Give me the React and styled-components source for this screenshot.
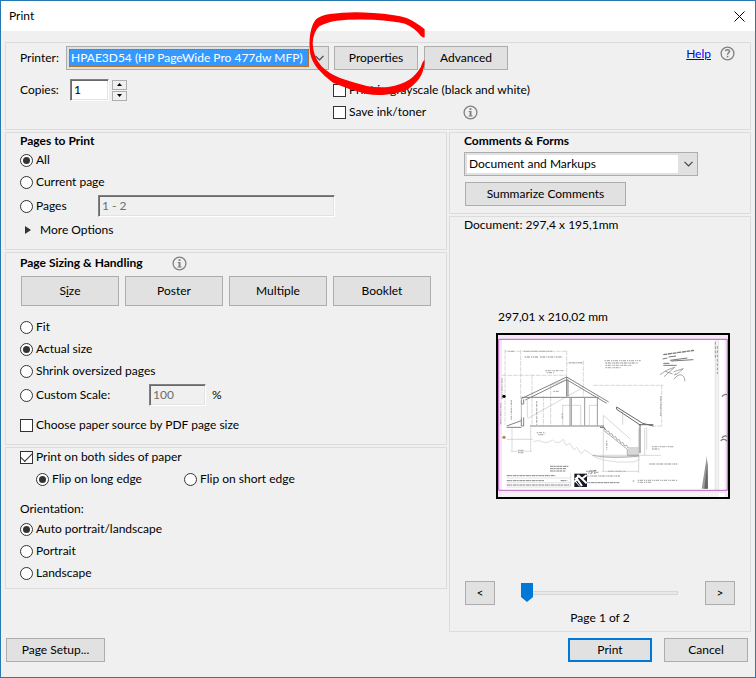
import { useState } from "react";
import styled, { createGlobalStyle, css } from "styled-components";

const GlobalStyle = createGlobalStyle`
  * {
    box-sizing: border-box;
  }
  body {
    margin: 0;
  }
  body, button, input, select {
    font-family: Lato, "Open Sans", sans-serif;
    font-size: 12px;
    line-height: 16px;
    color: #000;
  }
`;
const Window = styled.div`
  position: relative;
  display: flex;
  flex-direction: column;
  min-height: 100vh;
  background: #f0f0f0;
  border: 1px solid #2878b4;
`;
const TitleBar = styled.header`
  display: flex;
  align-items: center;
  justify-content: space-between;
  height: 30px;
  padding: 0 8px;
  background: #fff;
`;
const Title = styled.h1`
  margin: 0;
  font-size: 12px;
  font-weight: normal;
`;
const CloseButton = styled.button`
  display: flex;
  padding: 2px;
  border: 0;
  background: none;
`;
const Body = styled.main`
  display: grid;
  gap: 2px;
  padding: 11px 4px 0;
`;
const Columns = styled.div`
  display: grid;
  grid-template-columns: 1fr 302px;
  gap: 2px;
  align-items: start;
`;
const Column = styled.div`
  display: grid;
  gap: 2px;
`;
const Panel = styled.section`
  border: 1px solid #dcdcdc;
  padding: ${props => props.$top || 0}px 14px ${props => props.$bottom || 0}px;
`;
const Heading = styled.h2`
  display: flex;
  align-items: center;
  gap: 29px;
  height: ${props => props.$height || 16}px;
  margin: 0 0 ${props => props.$bottom || 0}px;
  font-size: 12px;
  font-weight: bold;
`;
const Row = styled.div`
  display: flex;
  align-items: center;
  height: ${props => props.$height || 22}px;
  gap: ${props => props.$gap || 0}px;
  margin-top: ${props => props.$top || 0}px;
  padding-left: ${props => props.$indent || 0}px;
`;
const Spacer = styled.div`
  flex: 1;
`;
const FieldLabel = styled.label`
  width: ${props => props.$width}px;
`;
const Button = styled.button`
  min-width: ${props => props.$width || 84}px;
  height: ${props => props.$height || 24}px;
  padding: 0;
  background: #e1e1e1;
  border: 1px solid #adadad;
  white-space: nowrap;
  ${props => props.$primary && css`
    border: 2px solid #0078d7;
  `}
`;
const Marked = styled.div`
  position: relative;
  display: flex;
`;
const RedCircle = styled.svg`
  position: absolute;
  left: -25px;
  top: -35px;
  z-index: 2;
  pointer-events: none;
`;
const Combo = styled.div`
  display: flex;
  align-items: center;
  width: ${props => props.$width}px;
  height: 24px;
  padding: 2px;
  background: #e1e1e1;
  border: 1px solid #adadad;
  svg {
    margin: 0 2px 0 6px;
  }
  select {
    flex: 1;
    min-width: 0;
    height: 18px;
    padding: 0 2px;
    appearance: none;
    border: 0;
    border-radius: 0;
    outline: 0;
    background: #fff;
    line-height: 16px;
  }
  ${props => props.$active && css`
    select {
      background: #3399ff;
      color: #fff;
      border: 1px dotted #b06820;
      padding: 0 1px;
    }
  `}
`;
const TextBox = styled.input`
  width: ${props => props.$width}px;
  height: 22px;
  padding: 0 1px 2px 3px;
  background: #fff;
  border: 1px solid;
  border-color: #808080 #fff #fff #808080;
  border-radius: 0;
  box-shadow: inset 1px 1px 0 #696969, inset -1px -1px 0 #e3e3e3;
  &:disabled {
    background: #f0f0f0;
    color: #6d6d6d;
  }
`;
const Spinner = styled.div`
  display: grid;
  gap: 1px;
  margin-left: 3px;
  button {
    display: flex;
    align-items: center;
    justify-content: center;
    width: 15px;
    height: 10px;
    padding: 0;
    background: #f0f0f0;
    border: 1px solid #adadad;
  }
`;
const Choice = styled.label`
  display: flex;
  align-items: center;
  gap: 3px;
  height: 22px;
  white-space: nowrap;
  width: ${props => props.$width ? props.$width + "px" : "auto"};
  input {
    flex: none;
    display: grid;
    place-content: center;
    width: 13px;
    height: 13px;
    margin: 0;
    appearance: none;
    background: #fff;
    border: 1px solid #333;
  }
  input[type="radio"] {
    border-radius: 50%;
  }
  input[type="radio"]:checked::before {
    content: "";
    width: 7px;
    height: 7px;
    border-radius: 50%;
    background: #333;
  }
  input[type="checkbox"]:checked::before {
    content: "";
    width: 10px;
    height: 5px;
    border: solid #333;
    border-width: 0 0 1px 1px;
    transform: translateY(-1px) rotate(-45deg);
  }
`;
const PrinterOptions = styled.div`
  display: flex;
  align-items: flex-start;
  margin-top: 7px;
`;
const Copies = styled.div`
  display: flex;
  align-items: center;
  width: 313px;
  height: 22px;
`;
const HelpLink = styled.a`
  margin-bottom: 8px;
  color: #0000ee;
`;
const HelpIcon = styled.div`
  display: flex;
  margin: 0 1px 10px 9px;
`;
const MoreOptions = styled.button`
  display: flex;
  align-items: center;
  gap: 9px;
  height: 22px;
  padding: 0 0 0 5px;
  border: 0;
  background: none;
`;
const ButtonRow = styled.div`
  display: flex;
  gap: 6px;
  margin: 3px 0 10px;
  padding-left: 1px;
`;
const CommentActions = styled.div`
  padding: 6px 0 7px 1px;
`;
const Preview = styled.figure`
  width: 234px;
  margin: 76px auto 82px 32px;
  figcaption {
    padding: 0 2px;
    height: 24px;
  }
`;
const Page = styled.svg`
  display: block;
  width: 100%;
  background: #fff;
`;
const Pager = styled.div`
  display: flex;
  align-items: center;
  justify-content: space-between;
  padding: 0 1px;
`;
const PageSlider = styled.input`
  flex: 1;
  margin: 0 27px 0 26px;
  height: 20px;
  min-width: 0;
  appearance: none;
  background: none;
  &::-webkit-slider-runnable-track {
    height: 4px;
    background: #e7eaea;
    border: 1px solid #d6d6d6;
  }
  &::-webkit-slider-thumb {
    appearance: none;
    width: 12px;
    height: 19px;
    margin: -9px 0 0 -1px;
    background: #0078d7;
    clip-path: polygon(0 0, 100% 0, 100% 74%, 50% 100%, 0 74%);
  }
`;
const PageCount = styled.div`
  padding: 5px 0;
  text-align: center;
`;
const Footer = styled.footer`
  display: flex;
  gap: 12px;
  margin-top: auto;
  padding: 6px 7px 15px 5px;
`;

function Chevron() {
  return (
    <svg width="9" height="6" viewBox="0 0 9 6" aria-hidden="true">
      <path d="M0.5 0.8L4.5 4.8L8.5 0.8" fill="none" stroke="#444" strokeWidth="1.2" />
    </svg>
  );
}

function InfoIcon() {
  return (
    <svg width="15" height="15" viewBox="0 0 15 15" aria-hidden="true">
      <circle cx="7.5" cy="7.5" r="6.4" fill="none" stroke="#808080" strokeWidth="1.3" />
      <path d="M6.5 3.2h2v1.7h-2zM5.7 6h2.8v4.6h1v1H5.6v-1h1V7h-.9z" fill="#808080" />
    </svg>
  );
}

function QuestionIcon() {
  return (
    <svg width="15" height="15" viewBox="0 0 15 15" aria-hidden="true">
      <circle cx="7.5" cy="7.5" r="6.4" fill="none" stroke="#808080" strokeWidth="1.3" />
      <path d="M5.4 5.2C5.6 3.2 9.6 3.3 9.5 5.4C9.4 6.8 7.6 6.8 7.5 8.7" fill="none" stroke="#808080" strokeWidth="1.5" />
      <path d="M6.7 9.8h1.7v1.6H6.7z" fill="#808080" />
    </svg>
  );
}

function Circled() {
  return (
    <RedCircle width="117" height="86" viewBox="27 33 351 258" aria-hidden="true">
      <path
        fill="#fe0000"
        d="M374 88Q345 64 320 54Q285 43 220 39Q150 34 90 42Q62 46 48 58Q36 72 31 100Q26 130 31 162Q36 185 52 205Q75 232 100 249Q150 270 200 282Q225 286 255 284Q300 280 325 267Q352 248 364 225Q374 204 374 180Q368 183 362 202Q348 225 330 238Q305 255 265 261Q230 263 200 258Q160 248 120 234Q85 220 64 198Q40 172 38 130Q40 95 58 79Q75 68 110 62Q150 57 220 59Q285 63 315 71Q345 84 362 107Q368 114 374 112Z"
      />
    </RedCircle>
  );
}

// section drawing of the house, on a sheet with scanned edges
function Drawing() {
  return (
    <Page viewBox="18 15 702 498" role="img" aria-label="Page preview">
      <path fill="#fff" d="M18 15h702v498H18z" />
      <path fill="#f6e6f7" d="M24 21h12v486H24zM24 21h690v13H24zM704 21h10v486h-10zM24 489h690v6H24z" />
      <path fill="#f2f2f2" d="M674 36h12v450h-12zM36 496h650v11H36z" />
      <g fill="none" stroke="#c4c4c4" strokeWidth="2">
        <path d="M45 70H230M45 64V290M92 66V212M230 68V205M230 105H283M280 98V205M126 140V294M160 205V294M182 172V294M36 142H228M310 172H520M515 170V294M515 294H488" strokeDasharray="14 3" />
        <path d="M112 272L280 178M182 172L222 158M112 216V268M218 230V292M218 232H244M298 232V292M298 232H322M272 232V292M272 232H244M398 246V290M340 262L422 334M340 262V430M446 300V435M464 300V382M470 298V365" />
        <path d="M66 298V370M122 298V370M62 370H126M130 340L148 338L164 344L176 342L188 336L198 344L210 342L220 334L228 352L240 346L252 366L260 358L274 378L284 366L300 376L316 388L340 396L380 402L430 402L450 394" stroke="#ccc" />
        <path d="M50 334H128M308 382H512M335 430H446M330 386H450" />
      </g>
      <g fill="none" stroke="#838383" strokeWidth="3">
        <path d="M94 212L230 147L356 222M106 216L230 155L350 226M94 208H326M230 147V205M234 155V205M94 214V228H101V214M94 268V294H101V268M120 294H342M50 294L94 278M50 298H94" />
        <path d="M244 208V293M240 208V293M284 208V293M322 208V293" stroke="#999" />
        <path d="M380 237L458 286L490 294M380 244L452 292M380 237V244M450 290V375M446 290H490M330 298H342L346 306" stroke="#666" />
        <path d="M344 300L350 310L356 309L359 318L366 317L370 327L377 326L381 336L388 335L392 345L399 344L403 353L410 352L414 360H446M342 308L412 364V382H446M414 366H446M414 372H446M414 378H446" stroke="#888" strokeWidth="2" />
        <path d="M308 382C340 390 400 390 446 384M94 228V268" stroke="#999" strokeWidth="2" />
      </g>
      <g fill="none" stroke="#b4b4b4" strokeWidth="4" strokeDasharray="5 2 9 3 3 2">
        <path d="M102 70H186M56 70H74M104 87H144M150 87H218M166 128H222M170 134H192M238 104H276" />
        <path d="M344 98H452M346 105H444M346 112H426M346 119H394M140 314H166M144 320H164M84 367H100M84 374H100" />
        <path d="M486 356H552M486 363H510M478 408H562M354 430H406M443 457H564M443 463H486M428 459H434M280 444H390" />
        <path d="M64 216V275M512 204V264M36 150V215M32 225V290M140 220V290M350 338V365M217 256V272M190 190H206" />
      </g>
      <g fill="none" stroke="#868686" strokeWidth="3" strokeDasharray="10 1 6 2">
        <path d="M180 415H236M180 422H228M180 429H226M50 443H196M50 458H164M212 458H232M50 471H242M284 464H388" />
      </g>
      <path d="M50 450H242M50 464H242M50 477H242M242 437V477" stroke="#d4d4d4" strokeWidth="2" fill="none" />
      <g fill="none" stroke="#777" strokeWidth="3">
        <path d="M520 80L612 67" strokeWidth="4" strokeDasharray="12 2" />
        <path d="M518 93L532 90M536 87L558 84M540 97L592 90M520 106H538M520 112H560M544 99L610 95" />
        <path d="M510 140C526 128 540 122 554 118L522 146M526 130L548 138M550 132C560 128 572 124 580 122C566 136 544 148 558 136M552 154C568 130 586 142 584 160" strokeWidth="2" />
        <path d="M296 438C298 424 310 426 302 438C318 422 320 424 312 436L326 432M288 430L320 428" strokeWidth="2" />
      </g>
      <path fill="#161822" d="M253 437h38v40h-38z" />
      <path d="M255 454L267 444L290 466M262 441L276 452L290 441M253 462L262 454L276 474" fill="none" stroke="#fff" strokeWidth="6" />
      <path d="M258 462L270 476" stroke="#fff" strokeWidth="3" />
      <path fill="#999" d="M651 382L635 482H651z" />
      <path fill="#666" d="M653 395L643 482H654z" />
      <path d="M676 36V486M686 36V486" stroke="#ddd" strokeWidth="2" />
      <path d="M676 42V92M682 54V138" stroke="#999" strokeWidth="3" strokeDasharray="8 5" />
      <circle cx="42" cy="205" r="5" fill="#000" />
      <circle cx="42" cy="328" r="5" fill="#b58a5a" />
      <path d="M696 206Q702 197 711 200M696 330Q702 321 711 325M692 338Q702 330 711 339" stroke="#777" strokeWidth="4" fill="none" />
      <path d="M26 34H712V487H26z" fill="none" stroke="#b464b8" strokeWidth="3" />
      <path d="M21 18H717V510H21z" fill="none" stroke="#000" strokeWidth="6" />
    </Page>
  );
}

function Radio({name, value, state, width, children}) {
  const [selected, setSelected] = state;
  return (
    <Choice $width={width}>
      <input type="radio" name={name} checked={selected === value} onChange={() => setSelected(value)} />
      {children}
    </Choice>
  );
}

export default function App() {
  const pages = useState("all");
  const sizing = useState("actual");
  const flip = useState("long");
  const orientation = useState("auto");
  const [copies, setCopies] = useState(1);
  const [page, setPage] = useState(1);
  return (
    <Window>
      <GlobalStyle />
      <TitleBar>
        <Title>Print</Title>
        <CloseButton aria-label="Close">
          <svg width="11" height="11" viewBox="0 0 11 11" aria-hidden="true">
            <path d="M0.5 0.5L10.5 10.5M10.5 0.5L0.5 10.5" stroke="#000" />
          </svg>
        </CloseButton>
      </TitleBar>
      <Body>
        <Panel $top={1} $bottom={6}>
          <Row $height={28}>
            <FieldLabel htmlFor="printer" $width={46}>Printer:</FieldLabel>
            <Combo $width={263} $active>
              <select id="printer">
                <option>HPAE3D54 (HP PageWide Pro 477dw MFP)</option>
              </select>
              <Chevron />
            </Combo>
            <Row $indent={5} $gap={6}>
              <Marked>
                <Button>Properties</Button>
                <Circled />
              </Marked>
              <Button>Advanced</Button>
            </Row>
            <Spacer />
            <HelpLink href="#help">Help</HelpLink>
            <HelpIcon><QuestionIcon /></HelpIcon>
          </Row>
          <PrinterOptions>
            <Copies>
              <FieldLabel htmlFor="copies" $width={50}>Copies:</FieldLabel>
              <TextBox id="copies" $width={39} value={copies} onChange={ev => setCopies(ev.target.value)} />
              <Spinner>
                <button aria-label="More copies" onClick={() => setCopies(Number(copies) + 1)}>
                  <svg width="5" height="3" viewBox="0 0 5 3"><path d="M0 3L2.5 0L5 3z" /></svg>
                </button>
                <button aria-label="Fewer copies" onClick={() => setCopies(Math.max(1, copies - 1))}>
                  <svg width="5" height="3" viewBox="0 0 5 3"><path d="M0 0L2.5 3L5 0z" /></svg>
                </button>
              </Spinner>
            </Copies>
            <div>
              <Choice>
                <input type="checkbox" />
                Print in grayscale (black and white)
              </Choice>
              <Row>
                <Choice $width={130}>
                  <input type="checkbox" />
                  Save ink/toner
                </Choice>
                <InfoIcon />
              </Row>
            </div>
          </PrinterOptions>
        </Panel>
        <Columns>
          <Column>
            <Panel $bottom={8}>
              <Heading>Pages to Print</Heading>
              <Radio name="pages" value="all" state={pages}>All</Radio>
              <Radio name="pages" value="current" state={pages}>Current page</Radio>
              <Row $height={26}>
                <Radio name="pages" value="range" state={pages} width={78}>Pages</Radio>
                <TextBox $width={237} aria-label="Page range" defaultValue="1 - 2" disabled={pages[0] !== "range"} />
              </Row>
              <MoreOptions>
                <svg width="6" height="8" viewBox="0 0 6 8" aria-hidden="true"><path d="M0 0L6 4L0 8z" fill="#333" /></svg>
                More Options
              </MoreOptions>
            </Panel>
            <Panel $bottom={8}>
              <Heading $height={20}>Page Sizing &amp; Handling <InfoIcon /></Heading>
              <ButtonRow>
                <Button $width={98} $height={30}>S<u>i</u>ze</Button>
                <Button $width={98} $height={30}>Poster</Button>
                <Button $width={98} $height={30}>Multiple</Button>
                <Button $width={98} $height={30}>Booklet</Button>
              </ButtonRow>
              <Radio name="sizing" value="fit" state={sizing}>Fit</Radio>
              <Radio name="sizing" value="actual" state={sizing}>Actual size</Radio>
              <Radio name="sizing" value="shrink" state={sizing}>Shrink oversized pages</Radio>
              <Row $height={26}>
                <Radio name="sizing" value="custom" state={sizing} width={129}>Custom Scale:</Radio>
                <Row $gap={6}>
                  <TextBox $width={57} aria-label="Custom scale" defaultValue="100" disabled={sizing[0] !== "custom"} />
                  %
                </Row>
              </Row>
              <Row $top={6}>
                <Choice>
                  <input type="checkbox" />
                  Choose paper source by PDF page size
                </Choice>
              </Row>
            </Panel>
            <Panel $bottom={4}>
              <Row $height={18}>
                <Choice>
                  <input type="checkbox" defaultChecked />
                  Print on both sides of paper
                </Choice>
              </Row>
              <Row $indent={16} $top={2}>
                <Radio name="flip" value="long" state={flip} width={148}>Flip on long edge</Radio>
                <Radio name="flip" value="short" state={flip}>Flip on short edge</Radio>
              </Row>
              <Row $height={18} $top={10}>Orientation:</Row>
              <Radio name="orientation" value="auto" state={orientation}>Auto portrait/landscape</Radio>
              <Radio name="orientation" value="portrait" state={orientation}>Portrait</Radio>
              <Radio name="orientation" value="landscape" state={orientation}>Landscape</Radio>
            </Panel>
          </Column>
          <Column>
            <Panel>
              <Heading $bottom={3}><label htmlFor="comments">Comments &amp; Forms</label></Heading>
              <Combo $width={234}>
                <select id="comments">
                  <option>Document and Markups</option>
                </select>
                <Chevron />
              </Combo>
              <CommentActions>
                <Button $width={161}>Summarize Comments</Button>
              </CommentActions>
            </Panel>
            <Panel>
              <div>Document: 297,4 x 195,1mm</div>
              <Preview>
                <figcaption>297,01 x 210,02 mm</figcaption>
                <Drawing />
              </Preview>
              <Pager>
                <Button $width={30} aria-label="Previous page" onClick={() => setPage(1)}>&lt;</Button>
                <PageSlider type="range" min="1" max="2" aria-label="Page" value={page} onChange={ev => setPage(Number(ev.target.value))} />
                <Button $width={30} aria-label="Next page" onClick={() => setPage(2)}>&gt;</Button>
              </Pager>
              <PageCount>Page {page} of 2</PageCount>
            </Panel>
          </Column>
        </Columns>
      </Body>
      <Footer>
        <Button $width={99}>Page Setup...</Button>
        <Spacer />
        <Button $primary>Print</Button>
        <Button>Cancel</Button>
      </Footer>
    </Window>
  );
}
